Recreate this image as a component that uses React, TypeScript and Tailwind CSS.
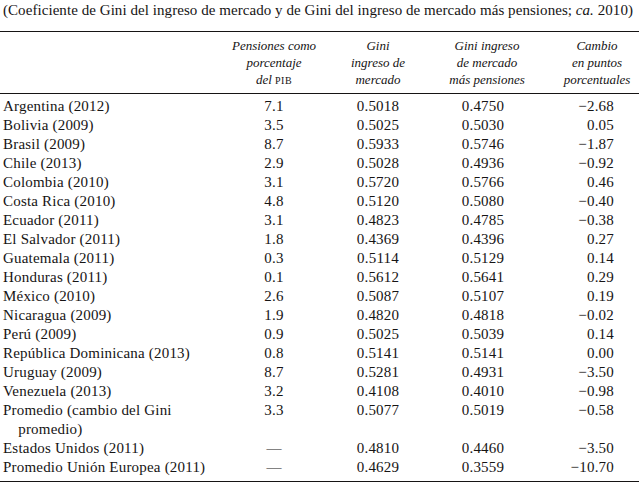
import React from "react"

// Fila: país, pensiones, gini mercado, gini con pensiones, cambio
const rows: [string, string, string, string, string][] = [
  ["Argentina (2012)", "7.1", "0.5018", "0.4750", "\u22122.68"],
  ["Bolivia (2009)", "3.5", "0.5025", "0.5030", "0.05"],
  ["Brasil (2009)", "8.7", "0.5933", "0.5746", "\u22121.87"],
  ["Chile (2013)", "2.9", "0.5028", "0.4936", "\u22120.92"],
  ["Colombia (2010)", "3.1", "0.5720", "0.5766", "0.46"],
  ["Costa Rica (2010)", "4.8", "0.5120", "0.5080", "\u22120.40"],
  ["Ecuador (2011)", "3.1", "0.4823", "0.4785", "\u22120.38"],
  ["El Salvador (2011)", "1.8", "0.4369", "0.4396", "0.27"],
  ["Guatemala (2011)", "0.3", "0.5114", "0.5129", "0.14"],
  ["Honduras (2011)", "0.1", "0.5612", "0.5641", "0.29"],
  ["México (2010)", "2.6", "0.5087", "0.5107", "0.19"],
  ["Nicaragua (2009)", "1.9", "0.4820", "0.4818", "\u22120.02"],
  ["Perú (2009)", "0.9", "0.5025", "0.5039", "0.14"],
  ["República Dominicana (2013)", "0.8", "0.5141", "0.5141", "0.00"],
  ["Uruguay (2009)", "8.7", "0.5281", "0.4931", "\u22123.50"],
  ["Venezuela (2013)", "3.2", "0.4108", "0.4010", "\u22120.98"],
  ["Promedio (cambio del Gini", "3.3", "0.5077", "0.5019", "\u22120.58"],
  ["\u2003promedio)", "", "", "", ""],
  ["Estados Unidos (2011)", "\u2014", "0.4810", "0.4460", "\u22123.50"],
  ["Promedio Unión Europea (2011)", "\u2014", "0.4629", "0.3559", "\u221210.70"],
]

const grid = "grid grid-cols-[228px_92px_116px_94px_109px]"

export default function App() {
  return (
    <div
      className="w-[639px] h-[488px] bg-white text-[#161414] overflow-hidden"
      style={{ fontFamily: '"Liberation Serif", serif' }}
    >
      <div className="pl-[3px] pt-[1px] text-[15px] leading-[19px] whitespace-nowrap tracking-[0.06px]">
        (Coeficiente de Gini del ingreso de mercado y de Gini del ingreso de mercado más pensiones; <i>ca.</i> 2010)
      </div>

      <div className="mt-[11px] border-t border-[#161414]" />

      {/* Encabezado */}
      <div className={`${grid} italic text-[13px] leading-[17px] pt-[5px] pb-[4px]`}>
        <div />
        <div className="text-center">
          Pensiones como
          <br />
          porcentaje
          <br />
          del <span className="text-[10px] uppercase not-italic tracking-[0.5px]">pib</span>
        </div>
        <div className="text-center">
          Gini
          <br />
          ingreso de
          <br />
          mercado
        </div>
        <div className="text-center pl-[8px]">
          Gini ingreso
          <br />
          de mercado
          <br />
          más pensiones
        </div>
        <div className="text-center pl-[25px]">
          Cambio
          <br />
          en puntos
          <br />
          porcentuales
        </div>
      </div>

      <div className="border-t border-[#161414]" />

      {/* Cuerpo */}
      <div className="pt-[3px] pb-[4px] text-[15px] leading-[19px] tracking-[0.2px]">
        {rows.map((r, i) => (
          <div key={i} className={grid}>
            <div className="pl-[3px] whitespace-pre">{r[0]}</div>
            <div className="text-center">{r[1]}</div>
            <div className="text-center">{r[2]}</div>
            <div className="text-center">{r[3]}</div>
            <div className="text-right pr-[25px]">{r[4]}</div>
          </div>
        ))}
      </div>

      <div className="border-t-[1.5px] border-[#161414]" />
    </div>
  )
}
